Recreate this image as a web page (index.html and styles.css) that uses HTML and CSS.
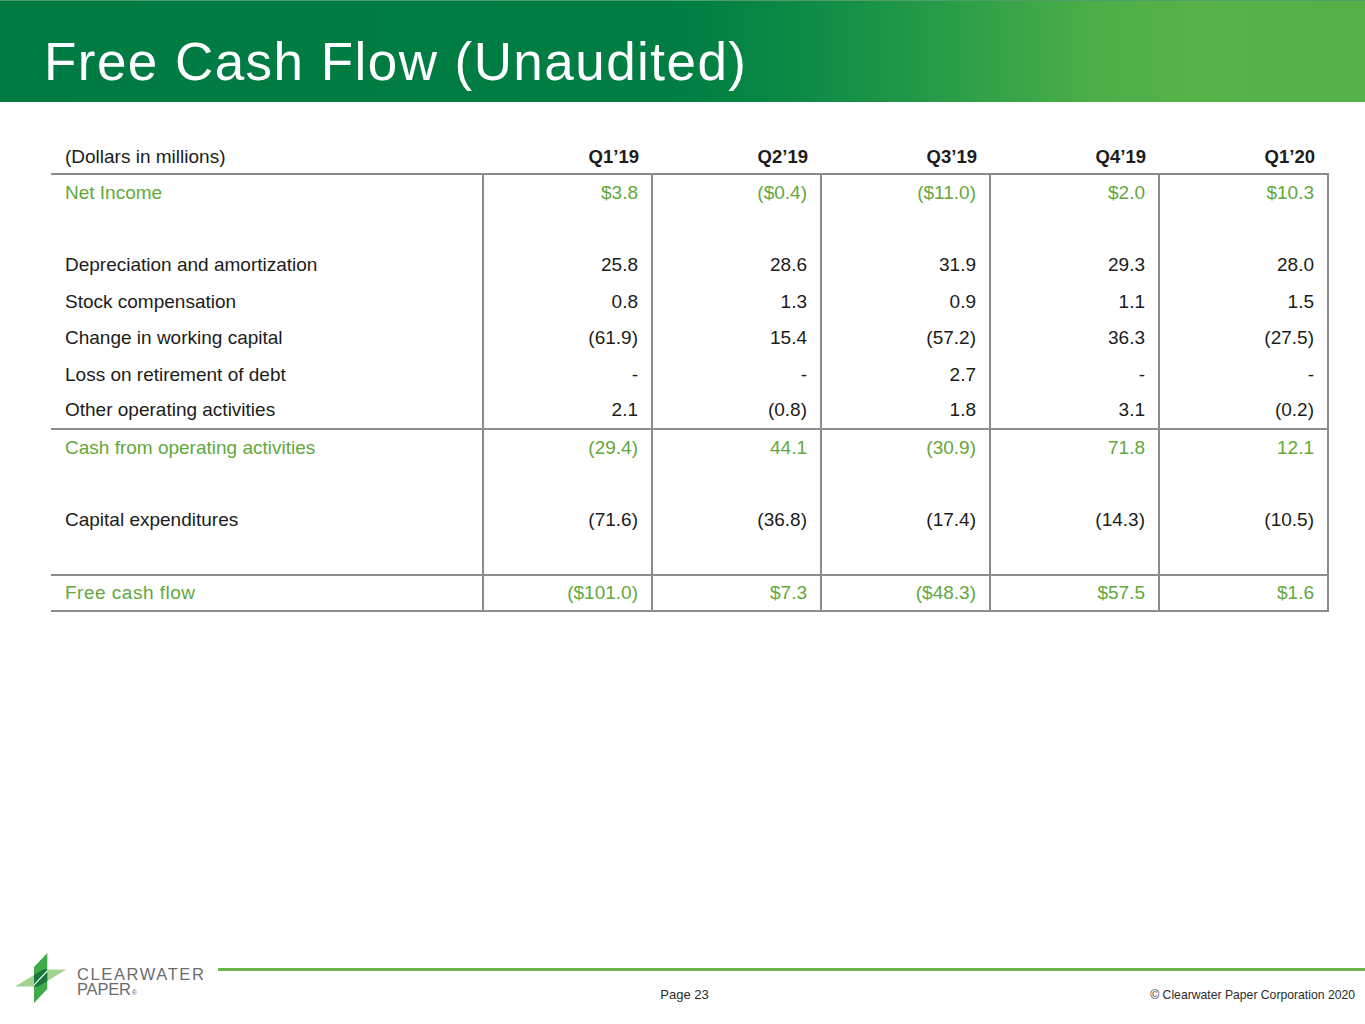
FILE: index.html
```html
<!DOCTYPE html>
<html lang="en">
<head>
<meta charset="utf-8">
<title>Free Cash Flow (Unaudited)</title>
<link rel="stylesheet" href="styles.css">
</head>
<body>
<div class="slide">
  <header class="banner">
    <h1 class="title">Free Cash Flow (Unaudited)</h1>
  </header>
  <main class="content">
    <table class="fcf">
      <colgroup>
        <col class="c-label"><col class="c-num"><col class="c-num"><col class="c-num"><col class="c-num"><col class="c-num">
      </colgroup>
      <thead>
        <tr>
          <th class="lbl">(Dollars in millions)</th>
          <th>Q1’19</th><th>Q2’19</th><th>Q3’19</th><th>Q4’19</th><th>Q1’20</th>
        </tr>
      </thead>
      <tbody>
        <tr class="green">
          <td class="lbl">Net Income</td><td>$3.8</td><td>($0.4)</td><td>($11.0)</td><td>$2.0</td><td>$10.3</td>
        </tr>
        <tr class="blank"><td class="lbl"></td><td></td><td></td><td></td><td></td><td></td></tr>
        <tr>
          <td class="lbl">Depreciation and amortization</td><td>25.8</td><td>28.6</td><td>31.9</td><td>29.3</td><td>28.0</td>
        </tr>
        <tr>
          <td class="lbl">Stock compensation</td><td>0.8</td><td>1.3</td><td>0.9</td><td>1.1</td><td>1.5</td>
        </tr>
        <tr>
          <td class="lbl">Change in working capital</td><td>(61.9)</td><td>15.4</td><td>(57.2)</td><td>36.3</td><td>(27.5)</td>
        </tr>
        <tr>
          <td class="lbl">Loss on retirement of debt</td><td>-</td><td>-</td><td>2.7</td><td>-</td><td>-</td>
        </tr>
        <tr class="rule">
          <td class="lbl">Other operating activities</td><td>2.1</td><td>(0.8)</td><td>1.8</td><td>3.1</td><td>(0.2)</td>
        </tr>
        <tr class="green">
          <td class="lbl">Cash from operating activities</td><td>(29.4)</td><td>44.1</td><td>(30.9)</td><td>71.8</td><td>12.1</td>
        </tr>
        <tr class="blank"><td class="lbl"></td><td></td><td></td><td></td><td></td><td></td></tr>
        <tr>
          <td class="lbl">Capital expenditures</td><td>(71.6)</td><td>(36.8)</td><td>(17.4)</td><td>(14.3)</td><td>(10.5)</td>
        </tr>
        <tr class="blank rule"><td class="lbl"></td><td></td><td></td><td></td><td></td><td></td></tr>
        <tr class="green rule total">
          <td class="lbl">Free cash flow</td><td>($101.0)</td><td>$7.3</td><td>($48.3)</td><td>$57.5</td><td>$1.6</td>
        </tr>
      </tbody>
    </table>
  </main>
  <footer class="footer">
    <div class="logo">
      <svg class="logo-mark" width="58" height="56" viewBox="0 0 58 56" aria-hidden="true">
        <polygon points="3,38.5 22,38.5 22,27" fill="#a3d391"/>
        <polygon points="35.3,21.5 54.3,21.5 35.3,33" fill="#a3d391"/>
        <polygon points="22,19 35.3,5 35.3,22 22,36" fill="#41aa4b"/>
        <polygon points="22,27 31.1,21.5 35.3,21.5 35.3,22 22,36" fill="#17773c"/>
        <polygon points="35.3,41 22,55 22,38 35.3,24" fill="#41aa4b"/>
        <polygon points="22,38 35.3,24 35.3,33 26.2,38.5 22,38.5" fill="#17773c"/>
      </svg>
      <p class="logo-text"><span class="lt1">CLEARWATER</span><br><span class="lt2">PAPER<small>®</small></span></p>
    </div>
    <div class="footer-line"></div>
    <div class="page-no">Page 23</div>
    <div class="copyright">© Clearwater Paper Corporation 2020</div>
  </footer>
</div>
</body>
</html>
```

FILE: styles.css
```css
* { box-sizing: border-box; }

html, body {
  margin: 0;
  padding: 0;
  background: #ffffff;
}

body {
  font-family: "Liberation Sans", Arial, sans-serif;
  color: #1c1c1c;
}

.slide {
  width: 1365px;
  height: 1024px;
  display: flex;
  flex-direction: column;
  overflow: hidden;
}

/* ---------- banner ---------- */
.banner {
  height: 102px;
  flex: 0 0 102px;
  background: linear-gradient(to right, #007a43 0%, #007e43 50%, #0f8c45 60%, #2a9e48 70%, #4cae47 80%, #56b249 87%, #55b04a 100%);
  border-top: 1px solid #4f9e6a;
  padding: 31px 0 0 44px;
}

.title {
  margin: 0;
  font-weight: normal;
  font-size: 53px;
  line-height: 60px;
  letter-spacing: 1.45px;
  color: #ffffff;
}

/* ---------- table ---------- */
.content {
  flex: 1 1 auto;
  padding: 36px 0 0 51px;
}

.fcf {
  border-collapse: collapse;
  table-layout: fixed;
  width: 1278px;
  font-size: 19px;
}

.c-label { width: 432px; }
.c-num { width: 169px; }

.fcf th,
.fcf td {
  height: 36.4px;
  padding: 0 13px 0 14px;
  text-align: right;
  vertical-align: middle;
  white-space: nowrap;
}

.fcf th {
  padding-top: 2px;
  font-weight: bold;
  font-size: 18.5px;
  color: #1c1c1c;
  border-bottom: 2px solid #8c8c8c;
}

.fcf th.lbl {
  font-weight: normal;
  font-size: 19px;
}

.fcf .lbl {
  text-align: left;
}

.fcf td + td {
  border-left: 2px solid #8c8c8c;
}

.fcf td:last-child {
  border-right: 2px solid #8c8c8c;
}

.fcf tr.rule td {
  border-bottom: 2px solid #8c8c8c;
}

.fcf tr.green td {
  color: #62a83c;
}

.fcf tr.total td.lbl {
  letter-spacing: 0.5px;
}

/* ---------- footer ---------- */
.footer {
  flex: 0 0 78px;
  display: grid;
  grid-template-columns: 1fr auto 1fr;
  grid-template-rows: 22px 3px 1fr;
}

.logo {
  grid-column: 1;
  grid-row: 1 / 4;
  display: flex;
  align-items: flex-start;
  gap: 7px;
  margin: 2px 0 0 12px;
  justify-self: start;
}

.logo-mark {
  display: block;
}

.logo-text {
  margin: 19px 0 0;
  color: #6b6c6f;
  font-size: 16.5px;
  line-height: 14.5px;
  white-space: nowrap;
}

.lt1 {
  letter-spacing: 1.6px;
}

.lt2 {
  letter-spacing: -0.2px;
}

.lt2 small {
  font-size: 7px;
  letter-spacing: 0;
  margin-left: 1px;
}

.footer-line {
  grid-column: 1 / 4;
  grid-row: 2;
  margin-left: 218px;
  background: #6db44f;
}

.page-no {
  grid-column: 2;
  grid-row: 3;
  padding: 16px 0 0 4px;
  font-size: 13px;
  line-height: 15px;
  color: #2b2b2b;
}

.copyright {
  grid-column: 3;
  grid-row: 3;
  justify-self: end;
  padding: 17px 10px 0 0;
  font-size: 12.2px;
  line-height: 14px;
  color: #2b2b2b;
}
```
